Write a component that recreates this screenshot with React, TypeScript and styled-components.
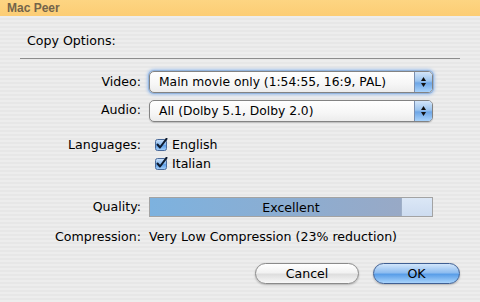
import React from "react";
import styled, { createGlobalStyle } from "styled-components";

const GlobalStyle = createGlobalStyle`
  html, body {
    margin: 0;
    padding: 0;
    width: 480px;
    height: 302px;
    overflow: hidden;
  }
  body {
    font-family: "DejaVu Sans", "Liberation Sans", sans-serif;
    font-size: 12.6px;
    color: #000;
  }
`;

const Window = styled.div`
  width: 480px;
  height: 302px;
  display: flex;
  flex-direction: column;
  background: repeating-linear-gradient(to bottom, #ededed 0 2px, #e7e7e7 2px 4px);
`;

const TitleBar = styled.div`
  height: 16px;
  flex: none;
  display: flex;
  align-items: center;
  padding-left: 7px;
  background: linear-gradient(to bottom, #fdd582, #fccd74);
  font-family: "Liberation Sans", sans-serif;
  font-weight: bold;
  font-size: 12px;
  color: #74654a;
`;

const Header = styled.div`
  margin: 17px 0 0 27px;
  height: 16px;
  line-height: 16px;
`;

const Separator = styled.div`
  height: 1px;
  margin: 9px 20px 0 20px;
  background: #8c8c8c;
`;

const Form = styled.div`
  display: grid;
  grid-template-columns: 141px 284px;
  column-gap: 8px;
  align-items: center;
`;

const Label = styled.div<{ $top: number }>`
  text-align: right;
  margin-top: ${(p) => p.$top}px;
  line-height: 16px;
  align-self: start;
  white-space: nowrap;
`;

const Popup = styled.div<{ $focused?: boolean; $top: number }>`
  margin-top: ${(p) => p.$top}px;
  height: 20px;
  border: 1px solid #838383;
  border-radius: 5px;
  display: flex;
  align-items: center;
  background: linear-gradient(to bottom, #ffffff, #f6f6f6 60%, #ececec);
  box-shadow: ${(p) =>
    p.$focused
      ? "0 0 0 1px #93b4dd, 0 0 3px 2px #a9c6ec"
      : "0 1px 1px rgba(0,0,0,0.18)"};
  overflow: hidden;
`;

const PopupText = styled.div`
  flex: 1;
  padding-left: 9px;
  font-size: 12.3px;
  white-space: nowrap;
`;

const PopupArrows = styled.div`
  width: 17px;
  height: 100%;
  border-left: 1px solid #7a8fb0;
  background: linear-gradient(to bottom, #d3e5f9 0%, #9cc4ee 45%, #6ea6e6 55%, #a8d2fb 100%);
  display: flex;
  align-items: center;
  justify-content: center;
`;

const Checks = styled.div`
  margin-top: 13px;
  display: flex;
  flex-direction: column;
`;

const CheckRow = styled.div`
  height: 19px;
  display: flex;
  align-items: center;
  gap: 4px;
  padding-left: 6px;
`;

const Bar = styled.div`
  margin-top: 24px;
  height: 18px;
  border: 1px solid #a3a3a3;
  background: linear-gradient(to bottom, #dbe7f6, #cddcf0);
  position: relative;
  display: flex;
  align-items: center;
  justify-content: center;
`;

const BarFill = styled.div`
  position: absolute;
  left: 0;
  top: 0;
  bottom: 0;
  background: linear-gradient(to right, #7db2df, #98a9c6);
  border-right: 1px solid #9fb0c8;
`;

const BarText = styled.span`
  position: relative;
`;

const Value = styled.div`
  margin-top: 12px;
  line-height: 16px;
  white-space: nowrap;
`;

const Buttons = styled.div`
  margin: 18px 20px 0 0;
  display: flex;
  justify-content: flex-end;
  gap: 14px;
`;

const Button = styled.div<{ $primary?: boolean; $w: number }>`
  width: ${(p) => p.$w}px;
  height: 19px;
  border-radius: 11px;
  display: flex;
  align-items: center;
  justify-content: center;
  border: 1px solid ${(p) => (p.$primary ? "#3f5f93" : "#8a8a8a")};
  background: ${(p) =>
    p.$primary
      ? "linear-gradient(to bottom, #d2e6fb 0%, #8fbdf0 45%, #5a9ee8 55%, #a9d4fc 100%)"
      : "linear-gradient(to bottom, #ffffff 0%, #f2f2f2 45%, #dedede 55%, #f8f8f8 100%)"};
  box-shadow: 0 1px 2px rgba(0, 0, 0, 0.25);
`;

const Arrows = () => (
  <svg width="7" height="12" viewBox="0 0 7 12">
    <path d="M3.5 1 L6 5 L1 5 Z" fill="#111" />
    <path d="M3.5 11 L6 7 L1 7 Z" fill="#111" />
  </svg>
);

const CheckBox = () => (
  <svg width="13" height="13" viewBox="0 0 13 13">
    <defs>
      <linearGradient id="cb" x1="0" y1="0" x2="0" y2="1">
        <stop offset="0" stopColor="#cfe3fa" />
        <stop offset="0.5" stopColor="#83b6ee" />
        <stop offset="0.55" stopColor="#5e9ee6" />
        <stop offset="1" stopColor="#a7d1fb" />
      </linearGradient>
    </defs>
    <rect x="0.5" y="1.5" width="11" height="11" rx="2" fill="url(#cb)" stroke="#4a6a9a" />
    <path d="M2.5 6.5 L5 9.5 L11.5 0.8" fill="none" stroke="#0d1a2e" strokeWidth="2" strokeLinecap="round" strokeLinejoin="round" />
  </svg>
);

const App: React.FC = () => {
  const quality = 0.89;
  return (
    <Window>
      <GlobalStyle />
      <TitleBar>Mac Peer</TitleBar>
      <Header>Copy Options:</Header>
      <Separator />
      <Form>
        <Label $top={15}>Video:</Label>
        <Popup $focused $top={12}>
          <PopupText>Main movie only (1:54:55, 16:9, PAL)</PopupText>
          <PopupArrows>
            <Arrows />
          </PopupArrows>
        </Popup>

        <Label $top={9}>Audio:</Label>
        <Popup $top={7}>
          <PopupText>All (Dolby 5.1, Dolby 2.0)</PopupText>
          <PopupArrows>
            <Arrows />
          </PopupArrows>
        </Popup>

        <Label $top={15}>Languages:</Label>
        <Checks>
          <CheckRow>
            <CheckBox />
            English
          </CheckRow>
          <CheckRow>
            <CheckBox />
            Italian
          </CheckRow>
        </Checks>

        <Label $top={26}>Quality:</Label>
        <Bar>
          <BarFill style={{ width: `${quality * 100}%` }} />
          <BarText>Excellent</BarText>
        </Bar>

        <Label $top={12}>Compression:</Label>
        <Value>Very Low Compression (23% reduction)</Value>
      </Form>
      <Buttons>
        <Button $w={102}>Cancel</Button>
        <Button $w={85} $primary>
          OK
        </Button>
      </Buttons>
    </Window>
  );
};

export default App;
